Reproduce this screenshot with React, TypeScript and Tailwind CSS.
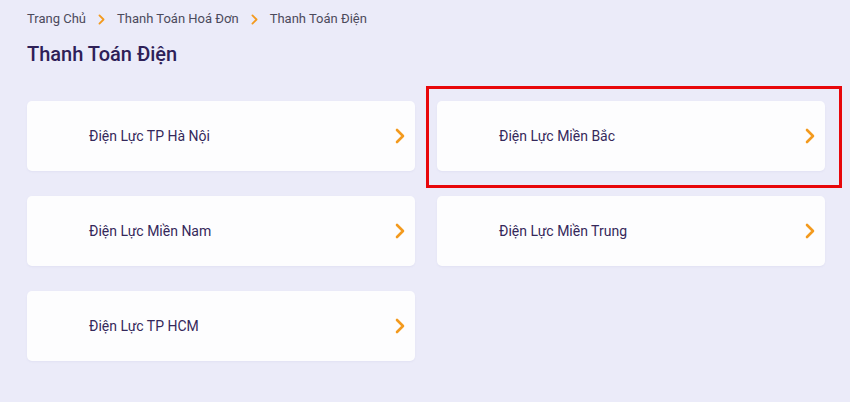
import React from "react";

const Chevron = ({ className = "" }: { className?: string }) => (
  <svg viewBox="0 0 10 16" className={className} fill="none">
    <path d="M2 2 L8 8 L2 14" stroke="#f39a1e" strokeWidth="2.6" strokeLinecap="round" strokeLinejoin="round" />
  </svg>
);

const Card = ({ label, highlight = false }: { label: string; highlight?: boolean }) => (
  <div className="relative">
    <div className="h-[70px] bg-[#fdfdfe] rounded-[5px] flex items-center pl-[62px] pr-[10px] shadow-[0_1px_2px_rgba(120,120,180,0.08)]">
      <span className="flex-1 text-[14px] text-[#35285a]">{label}</span>
      <Chevron className="w-[10px] h-[16px]" />
    </div>
    {highlight && (
      <div className="absolute -left-[11px] -top-[15px] -right-[17px] -bottom-[17px] border-[3px] border-[#e8070b] pointer-events-none" />
    )}
  </div>
);

export default function App() {
  return (
    <div
      className="w-[850px] h-[402px] bg-[#ebebf9] pl-[27px] pr-[25px] pt-[10px] overflow-hidden"
      style={{ fontFamily: "Roboto, 'Noto Sans', sans-serif" }}
    >
      <div className="flex items-center text-[13px] text-[#4b4a5c] h-[18px]">
        <span>Trang Chủ</span>
        <Chevron className="w-[7px] h-[11px] mx-[12px]" />
        <span>Thanh Toán Hoá Đơn</span>
        <Chevron className="w-[7px] h-[11px] mx-[12px]" />
        <span>Thanh Toán Điện</span>
      </div>
      <h1 className="mt-[13px] text-[20px] font-medium text-[#2e2058] leading-[26px]">Thanh Toán Điện</h1>
      <div className="mt-[34px] grid grid-cols-2 gap-x-[22px] gap-y-[25px] w-[798px]">
        <Card label="Điện Lực TP Hà Nội" />
        <Card label="Điện Lực Miền Bắc" highlight />
        <Card label="Điện Lực Miền Nam" />
        <Card label="Điện Lực Miền Trung" />
        <Card label="Điện Lực TP HCM" />
      </div>
    </div>
  );
}
